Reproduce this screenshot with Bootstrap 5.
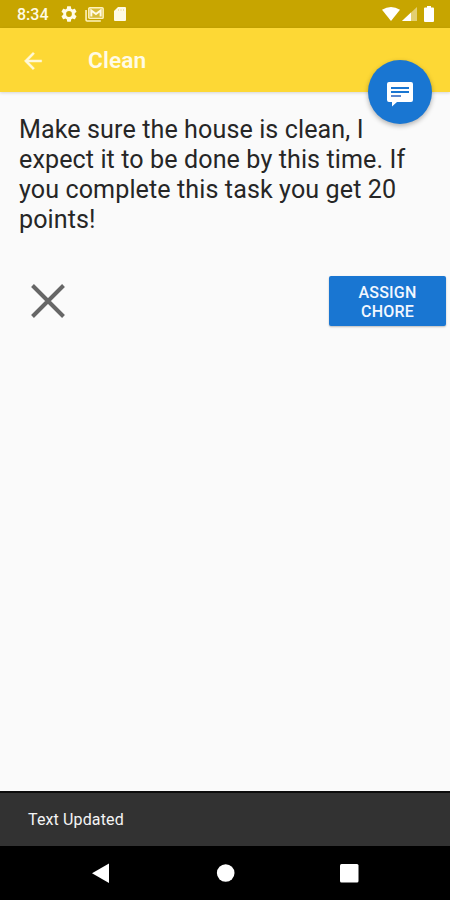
<!DOCTYPE html>
<html lang="en">
<head>
<meta charset="utf-8">
<meta name="viewport" content="width=device-width, initial-scale=1">
<title>Clean</title>
<link href="https://cdn.jsdelivr.net/npm/bootstrap@5.3.0/dist/css/bootstrap.min.css" rel="stylesheet">
<style>
body{font-family:Roboto,"Liberation Sans",sans-serif;background:#fafafa;color:#262626}
svg{display:block;flex:none}
.screen{height:900px;overflow:hidden}
.statusbar{height:28px;background:#c7a500;padding:0 15px 0 17px;color:#fffbe6;font-size:16px;line-height:28px;font-weight:500}
.clock{width:44px;padding-top:2px}
.appbar{height:64px;background:#fdd835;padding:1px 0 0 20px;box-shadow:0 1px 3px rgba(0,0,0,.15)}
.appbar h1{font-size:22.7px;font-weight:600;color:#fffbe6;margin-left:42px;letter-spacing:.1px}
.fab{position:absolute;right:18px;top:60px;width:64px;height:64px;background:#1976d2;box-shadow:0 2px 5px rgba(0,0,0,.3)}
.note{font-size:25.1px;line-height:30px;padding:23px 0 0 19px;white-space:nowrap;letter-spacing:.1px}
.actions{padding:41px 4px 0 30.5px}
.assign{width:117px;height:50px;background:#1976d2;color:#f2f7ff;font-size:16px;line-height:19px;font-weight:500;letter-spacing:.2px;padding-top:1px;border-radius:2px;box-shadow:0 1px 2px rgba(0,0,0,.25)}
.snack{height:55px;background:#323232;border-top:2px solid #0c0c0c;color:#f4f4f4;font-size:16px;letter-spacing:.13px;padding-left:28px}
.sysnav{height:54px;background:#000}
</style>
</head>
<body>
<div class="screen position-relative d-flex flex-column">
  <div class="statusbar d-flex align-items-center">
    <span class="clock">8:34</span>
    <svg width="16" height="16" viewBox="2 2 20 20" fill="#fffbe6"><path d="M19.14 12.94c.04-.3.06-.61.06-.94s-.02-.64-.07-.94l2.03-1.58c.18-.14.23-.41.12-.61l-1.92-3.32c-.12-.22-.37-.29-.59-.22l-2.39.96c-.5-.38-1.03-.7-1.62-.94L14.4 2.81c-.04-.24-.24-.41-.48-.41h-3.84c-.24 0-.43.17-.47.41l-.36 2.54c-.59.24-1.13.57-1.62.94l-2.39-.96c-.22-.08-.47 0-.59.22L2.74 8.87c-.12.21-.08.47.12.61l2.03 1.58c-.05.3-.09.63-.09.94s.02.64.07.94l-2.03 1.58c-.18.14-.23.41-.12.61l1.92 3.32c.12.22.37.29.59.22l2.39-.96c.5.38 1.03.7 1.62.94l.36 2.54c.05.24.24.41.48.41h3.84c.24 0 .44-.17.47-.41l.36-2.54c.59-.24 1.13-.56 1.62-.94l2.39.96c.22.08.47 0 .59-.22l1.92-3.32c.12-.22.07-.47-.12-.61l-2.01-1.58zM12 15.6a3.6 3.6 0 1 1 0-7.2 3.6 3.6 0 0 1 0 7.2z"/></svg>
    <svg class="ms-2" width="19" height="15" viewBox="0 0 18 15" preserveAspectRatio="none" fill="none" stroke="#fff3bd"><path d="M1 3v10q0 1 1 1h13" stroke-width="1.5"/><rect x="3.6" y=".8" width="13.6" height="10.6" rx="1" fill="#fff3bd" fill-opacity=".3" stroke-width="1.4"/><path d="M6 9.5V3.5l4.4 3.6 4.4-3.6V9.5" stroke="#fffbe6" stroke-width="1.9"/></svg>
    <svg width="12" height="14" viewBox="0 0 12 14" fill="#fffbe6" style="margin-left:10px"><path d="M4 0h7q1 0 1 1v12q0 1-1 1H1q-1 0-1-1V4z"/><path d="M4.5 2v2M7 2v2M9.5 2v2" stroke="#efdf9a" stroke-width=".8"/></svg>
    <svg class="ms-auto" width="18" height="14" viewBox="0 0 18 14" fill="#fff"><path d="M0 2.8Q9-2.8 18 2.8L9 14z"/></svg>
    <svg width="15" height="14" viewBox="0 0 15 14" style="margin-left:2px"><path d="M0 14 15 0v14z" fill="#e3cf72"/><path d="M0 14 9 5.6V14z" fill="#fff"/></svg>
    <svg width="10" height="16" viewBox="0 0 10 16" fill="#fff" style="margin:0 1px 0 7px"><path d="M3 0h4v1.5h2q1 0 1 1V15q0 1-1 1H1q-1 0-1-1V2.5q0-1 1-1h2z"/></svg>
  </div>
  <header class="appbar d-flex align-items-center">
    <svg width="26" height="26" viewBox="0 0 24 24" fill="#fff9d8" stroke="#fff9d8" stroke-width=".4"><path d="M20 11H7.83l5.59-5.59L12 4l-8 8 8 8 1.41-1.41L7.83 13H20z"/></svg>
    <h1 class="mb-0">Clean</h1>
  </header>
  <a class="fab rounded-circle d-flex align-items-center justify-content-center" href="#" aria-label="Message">
    <svg class="mt-1" width="26" height="25" viewBox="0 0 26 25"><path d="M2 0h22q2 0 2 2v16q0 2-2 2H10l-5 4.5V20H2q-2 0-2-2V2q0-2 2-2z" fill="#fff"/><path d="M4 6h18M4 10h18" stroke="#1976d2" stroke-width="2"/><path d="M4 14h10" stroke="#5c88cf" stroke-width="2"/></svg>
  </a>
  <main class="flex-grow-1">
    <p class="note mb-0">Make sure the house is clean, I<br>expect it to be done by this time. If<br>you complete this task you get 20<br>points!</p>
    <div class="actions d-flex justify-content-between align-items-center">
      <svg width="34" height="34" viewBox="0 0 34 34" stroke="#666" stroke-width="4"><path d="m1.5 1.5 31 31m0-31-31 31"/></svg>
      <button class="assign btn border-0 px-0 pb-0">ASSIGN<br>CHORE</button>
    </div>
  </main>
  <div class="snack d-flex align-items-center">Text Updated</div>
  <nav class="sysnav">
    <svg width="450" height="54" viewBox="0 0 450 54" fill="#fff"><path d="M92 27.2 109 17.5V37z"/><circle cx="225.7" cy="27" r="8.8"/><rect x="340" y="18" width="18.5" height="18.5" rx="1.5"/></svg>
  </nav>
</div>
<script src="https://cdn.jsdelivr.net/npm/bootstrap@5.3.0/dist/js/bootstrap.bundle.min.js"></script>
</body>
</html>
